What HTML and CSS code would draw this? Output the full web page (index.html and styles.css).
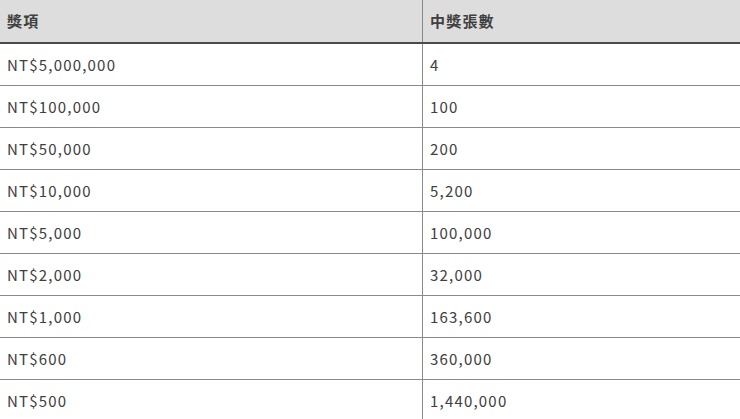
FILE: index.html
```html
<!DOCTYPE html>
<html lang="zh-Hant">
<head>
<meta charset="utf-8">
<link rel="stylesheet" href="styles.css">
</head>
<body>
<table class="prize-table">
  <thead>
    <tr><th class="col-a">獎項</th><th>中獎張數</th></tr>
  </thead>
  <tbody>
    <tr><td class="col-a">NT$5,000,000</td><td>4</td></tr>
    <tr><td class="col-a">NT$100,000</td><td>100</td></tr>
    <tr><td class="col-a">NT$50,000</td><td>200</td></tr>
    <tr><td class="col-a">NT$10,000</td><td>5,200</td></tr>
    <tr><td class="col-a">NT$5,000</td><td>100,000</td></tr>
    <tr><td class="col-a">NT$2,000</td><td>32,000</td></tr>
    <tr><td class="col-a">NT$1,000</td><td>163,600</td></tr>
    <tr><td class="col-a">NT$600</td><td>360,000</td></tr>
    <tr><td class="col-a">NT$500</td><td>1,440,000</td></tr>
  </tbody>
</table>
</body>
</html>
```
FILE: styles.css
```css
html, body {
  margin: 0;
  padding: 0;
  background: #ffffff;
}
body {
  font-family: "Noto Sans CJK TC", "Noto Sans", sans-serif;
  color: #404040;
}
.prize-table {
  width: 740px;
  border-collapse: collapse;
  table-layout: fixed;
}
.prize-table th,
.prize-table td {
  text-align: left;
  padding: 0 7px;
  font-size: 15px;
  letter-spacing: 1.2px;
  line-height: 20px;
}
.prize-table th {
  height: 42px;
  background: #dddddd;
  font-weight: 700;
  border-bottom: 2px solid #4a4a4a;
}
.prize-table td {
  height: 41px;
  border-bottom: 1px solid #8a8a8a;
  font-weight: 400;
}
.prize-table tbody tr:last-child td {
  border-bottom: none;
}
.prize-table .col-a {
  width: 408px;
  border-right: 1px solid #8a8a8a;
}
```
